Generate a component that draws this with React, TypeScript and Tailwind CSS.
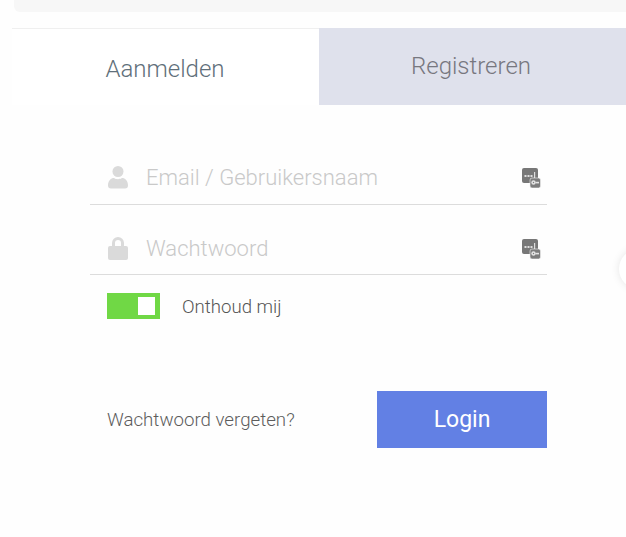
import React, { useState } from 'react';

const UserIcon = () => (
  <svg width="20" height="24" viewBox="0 0 20 24" className="shrink-0">
    <circle cx="10" cy="6.500" r="5.500" fill="#dadada" />
    <path d="M0 20.500c0-5 3-7.500 6-7.500 1 .8 2.500 1.200 4 1.200s3-.4 4-1.200c3 0 6 2.500 6 7.500 0 2-1 3-3 3H3c-2 0-3-1-3-3z" fill="#dadada" />
  </svg>
);

const LockIcon = () => (
  <svg width="20" height="24" viewBox="0 0 20 24" className="shrink-0">
    <path d="M4 11V7a6 6 0 0 1 12 0v4h-3V7a3 3 0 0 0-6 0v4z" fill="#dadada" />
    <rect x="0" y="10" width="20" height="14" rx="2" fill="#dadada" />
  </svg>
);

// password manager badge at the right of the inputs
const KeyBadge = () => (
  <svg width="19" height="20" viewBox="0 0 19 20" className="mt-[2px] mr-[6px] shrink-0">
    <rect x="0" y="0" width="16" height="15" rx="2" fill="#777" />
    <rect x="2.500" y="7" width="2" height="2" fill="#ddd" />
    <rect x="5.500" y="7" width="2" height="2" fill="#ddd" />
    <rect x="8.500" y="7" width="2" height="2" fill="#ddd" />
    <rect x="12" y="4" width="1.200" height="6" fill="#ddd" />
    <rect x="8" y="10" width="10.500" height="10" rx="2" fill="#7c7c7c" stroke="#f2f2f2" strokeWidth=".6" />
    <circle cx="11.500" cy="14.500" r="2.200" fill="#e4e4e4" />
    <circle cx="11.500" cy="14.500" r=".7" fill="#7c7c7c" />
    <rect x="13.500" y="13.800" width="3.500" height="1.600" fill="#e4e4e4" />
  </svg>
);

const Field = ({ icon, label, className }: { icon: React.ReactNode; label: string; className: string }) => (
  <div className={`flex items-center pl-[18px] border-b border-[#dcdcdc] ${className}`}>
    {icon}
    <span className="ml-[18px] flex-1 text-[22px] font-light text-[#c9c9c9]">{label}</span>
    <KeyBadge />
  </div>
);

export default function App() {
  const [remember, setRemember] = useState(true);

  return (
    <div className="relative h-[537px] w-[626px] overflow-hidden bg-[#fefefe] font-['Roboto',sans-serif]">
      <div className="ml-[14px] h-[12px] rounded-bl-md bg-[#f7f7f7]" />

      <div className="mt-4 ml-3 flex h-[77px]">
        <div className="flex w-[307px] items-center justify-center border-t border-[#efefef] bg-white pt-[3px] pr-[1px] text-2xl font-light text-[#5f6f7a]">
          Aanmelden
        </div>
        <div className="flex flex-1 items-center justify-center bg-[#dfe1ec] pr-[3px] pb-[2px] text-2xl font-light text-[#77777f]">
          Registreren
        </div>
      </div>

      <div className="mt-[47px] ml-[90px] w-[457px]">
        <Field icon={<UserIcon />} label="Email / Gebruikersnaam" className="h-[53px] pb-[2px]" />
        <Field icon={<LockIcon />} label="Wachtwoord" className="mt-[17px] h-[53px]" />

        <div className="mt-[18px] flex items-start pl-[17px]">
          <button
            onClick={() => setRemember(!remember)}
            className="flex h-[26px] w-[53px] items-center justify-end bg-[#70d845] pr-[5px]"
          >
            <span className="h-[18px] w-[17px] bg-white" />
          </button>
          <span className="ml-[22px] pt-[1px] text-[18.600px] font-light text-[#555]">Onthoud mij</span>
        </div>

        <div className="mt-[69px] flex items-center justify-between pl-[17px]">
          <a className="pt-[2px] text-[18.700px] font-light text-[#5c5c5c]">Wachtwoord vergeten?</a>
          <button className="h-[57px] w-[170px] bg-[#6280e4] pt-[2px] text-[23px] font-normal text-white">Login</button>
        </div>
      </div>

      {/* chat bubble peeking in from the right edge */}
      <div className="absolute top-[249px] left-[619px] h-10 w-10 rounded-full bg-white shadow-[0_0_8px_rgba(0,0,0,0.1)]" />
    </div>
  );
}
